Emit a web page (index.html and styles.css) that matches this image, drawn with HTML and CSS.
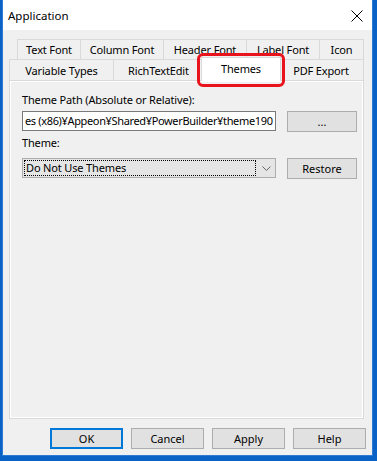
FILE: index.html
```html
<!DOCTYPE html>
<html lang="en">
<head>
  <meta charset="UTF-8" />
  <title>Application</title>
  <link rel="stylesheet" href="styles.css">
</head>
<body>
  <div class="window">
    <div class="titlebar">
      <span class="title">Application</span>
      <svg class="close" width="12" height="12" viewBox="0 0 12 12">
        <path d="M0.5 0.5 L11.5 11.5 M11.5 0.5 L0.5 11.5" stroke="#000" stroke-width="1" fill="none"/>
      </svg>
    </div>

    <div class="tabs">
      <div class="tab-row row-back">
        <div class="tab" style="width:63px">Text Font</div>
        <div class="tab" style="width:83px">Column Font</div>
        <div class="tab" style="width:83px">Header Font</div>
        <div class="tab" style="width:73px">Label Font</div>
        <div class="tab last" style="width:45px">Icon</div>
      </div>
      <div class="tab-row row-front">
        <div class="tab" style="width:104px">Variable Types</div>
        <div class="tab" style="width:90px">RichTextEdit</div>
        <div class="tab selected" style="width:80px">
          Themes
          <span class="highlight"></span>
        </div>
        <div class="tab last" style="width:85px">PDF Export</div>
      </div>

      <div class="panel">
        <div class="label">Theme Path (Absolute or Relative):</div>
        <div class="field-row">
          <div class="edit">es (x86)¥Appeon¥Shared¥PowerBuilder¥theme190</div>
          <button class="btn side">...</button>
        </div>
        <div class="label theme-label">Theme:</div>
        <div class="field-row">
          <div class="combo">
            <span class="focus">Do Not Use Themes</span>
            <svg class="chevron" width="9" height="5" viewBox="0 0 9 5">
              <path d="M0.5 0.5 L4.5 4.5 L8.5 0.5" stroke="#606060" stroke-width="1" fill="none"/>
            </svg>
          </div>
          <button class="btn side">Restore</button>
        </div>
      </div>
    </div>

    <div class="footer">
      <button class="btn default">OK</button>
      <button class="btn">Cancel</button>
      <button class="btn">Apply</button>
      <button class="btn">Help</button>
    </div>
  </div>
</body>
</html>
```

FILE: styles.css
```css
html, body { margin: 0; padding: 0; }
body {
  width: 377px; height: 461px; overflow: hidden;
  background: #0b62c6;
  font-family: "Noto Sans", "Liberation Sans", sans-serif;
  font-size: 11px; color: #000; letter-spacing: -0.15px;
}

.window {
  margin-left: 2px; width: 369px; height: 455px;
  background: #f0f0f0;
  border: 1px solid #2f7ad4; border-top: none;
  display: flex; flex-direction: column;
}

.titlebar {
  height: 30px; background: #fff;
  display: flex; align-items: center; justify-content: space-between;
  padding: 0 9px 0 5px;
}
.title { font-size: 11.5px; letter-spacing: 0; }
.close { margin-top: 1px; }

.tabs { margin-top: 9px; }
.tab-row { display: flex; }
.row-back { margin-left: 14px; height: 20px; }
.row-front { margin-left: 6px; height: 21px; align-items: flex-end; }

.tab {
  box-sizing: border-box; height: 100%;
  border: 1px solid #d9d9d9; border-right: none; border-bottom: none;
  display: flex; align-items: center; justify-content: center;
  background: #f0f0f0;
}
.tab.last { border-right: 1px solid #d9d9d9; }
.tab.selected {
  position: relative; z-index: 1;
  height: 24px; margin: 0 -2px -1px; padding-bottom: 3px;
  background: #fff; border-right: 1px solid #d9d9d9;
}
.tab.selected + .tab { border-left: none; }
.highlight {
  position: absolute; left: -5px; right: -5px; top: -5px; bottom: -6px;
  border: 3px solid #e8131b; border-radius: 6px;
}

.panel {
  margin-left: 6px; width: 355px; height: 339px; box-sizing: border-box;
  border: 1px solid #d9d9d9; box-shadow: inset 0 0 0 1px #fff;
  padding: 10px 0 0 12px;
}
.label { height: 18px; line-height: 18px; }
.theme-label { margin-top: 2px; margin-bottom: 6px; }
.field-row { display: flex; gap: 11px; margin-top: 2px; }

.edit {
  box-sizing: border-box; width: 254px; height: 20px;
  background: #fff; border: 1px solid #7a7a7a;
  padding-left: 2px; line-height: 18px; letter-spacing: -0.35px;
  white-space: nowrap; overflow: hidden;
}
.combo {
  box-sizing: border-box; width: 254px; height: 20px;
  background: #e5e5e5; border: 1px solid #adadad;
  display: flex; align-items: center; padding: 0 4px 0 1px;
}
.focus {
  box-sizing: border-box; width: 234px; height: 16px; line-height: 14px;
  border: 1px dotted #000; padding-left: 1px;
}
.chevron { margin-left: 6px; }

.btn {
  box-sizing: border-box; width: 73px; height: 21px;
  background: #e1e1e1; border: 1px solid #adadad;
  font: inherit; color: #000; padding: 0;
}
.btn.side { width: 70px; }
.btn.default { border: 2px solid #0078d7; }

.footer {
  display: flex; justify-content: flex-end; gap: 8px;
  margin-top: 9px; padding-right: 6px;
}
```
